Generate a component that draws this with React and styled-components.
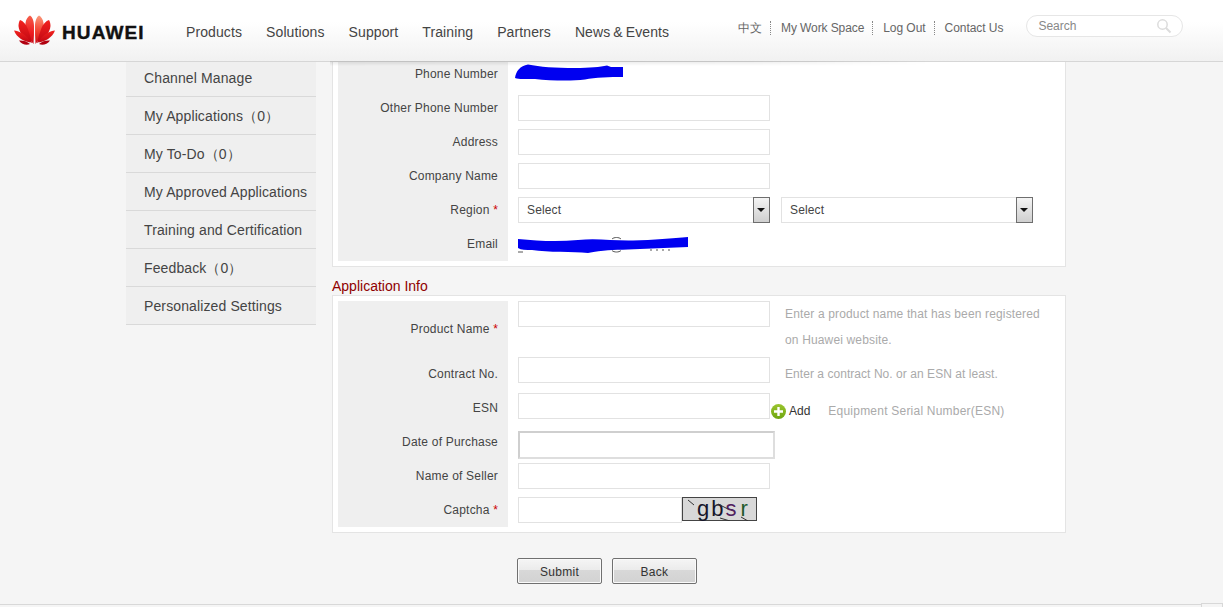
import React from "react";
import styled, { createGlobalStyle } from "styled-components";

const navItems = ["Products", "Solutions", "Support", "Training", "Partners", "News & Events"];
const topLinks = ["中文", "My Work Space", "Log Out", "Contact Us"];
const sideItems = [
  "Channel Manage",
  "My Applications（0）",
  "My To-Do（0）",
  "My Approved Applications",
  "Training and Certification",
  "Feedback（0）",
  "Personalized Settings",
];

const GlobalStyle = createGlobalStyle`
  html, body {
    margin: 0;
    padding: 0;
    background: #f5f5f5;
    font-family: "Liberation Sans", Arial, sans-serif;
    overflow: hidden;
  }
  * { box-sizing: border-box; }
`;

// left half of the logo, drawn a second time mirrored
const Petals = ({ light }) => (
  <>
    <path d="M19.500 29 C14 22 10.500 15 11.500 8 C12 4 14 1.500 16 0.500 C18.500 2 20 6 20 11 C20 17 20 23 19.500 29Z" fill={`url(#${light})`} />
    <path d="M18 28 C11 24 5 18 4.500 11 C4.500 9 5 6.500 6 5 C9 6 12 9 13.500 13 C15.500 18 17 23 18 28Z" fill="url(#petalMid)" />
    <path d="M16.500 27.500 C10 26.500 3 23 0 15.500 C5 16 10 19 13 22 C14.500 24 16 26 16.500 27.500Z" fill="url(#petalMid)" />
    <path d="M5 25.500 C8 25 13 26 16 29 C13 30.500 8 30 5 25.500Z" fill="#b00010" />
  </>
);

const Logo = () => (
  <svg width="41" height="31" viewBox="0 0 41 31">
    <defs>
      <linearGradient id="petalTopL" x1="0" y1="0" x2="0" y2="1">
        <stop offset="0" stopColor="#f5604c" />
        <stop offset="0.6" stopColor="#ee1c20" />
        <stop offset="1" stopColor="#c80a14" />
      </linearGradient>
      <linearGradient id="petalTopR" x1="0" y1="0" x2="0" y2="1">
        <stop offset="0" stopColor="#fb9a7c" />
        <stop offset="0.55" stopColor="#f2402f" />
        <stop offset="1" stopColor="#c80a14" />
      </linearGradient>
      <linearGradient id="petalMid" x1="0" y1="0" x2="0" y2="1">
        <stop offset="0" stopColor="#f2231f" />
        <stop offset="1" stopColor="#c00612" />
      </linearGradient>
    </defs>
    <Petals light="petalTopL" />
    <g transform="translate(41 0) scale(-1 1)">
      <Petals light="petalTopR" />
    </g>
  </svg>
);

const SearchGlyph = () => (
  <svg width="16" height="16" viewBox="0 0 16 16" fill="none" stroke="#dcdcdc">
    <circle cx="6.500" cy="6.500" r="4.700" strokeWidth="1.500" />
    <path d="M10 10l4.500 4.500" strokeWidth="2" />
  </svg>
);

const PhoneScribble = () => (
  <PhoneSvg width="108" height="18" viewBox="0 0 108 18">
    <path d="M0 14 C1 7 5 2 13 0.500 C25 3 40 4 60 4 C75 4 85 3 92 1.500 L96 3 L108 3 L108 13 C95 13 80 13.500 70 15.500 C55 17.500 35 16.500 20 15 C12 14.500 5 16 0 14Z" fill="#0000f0" />
  </PhoneSvg>
);

const EmailScribble = () => (
  <EmailSvg width="172" height="18" viewBox="0 0 172 18">
    <path d="M0 3 C20 5 40 6 60 4 C80 2 95 5 115 4.500 C135 4 155 2 170 1 L170 11 C150 12 130 12.500 110 13.500 C95 14 85 14 70 17 C55 15.500 30 16.500 14 14 C8 14 3 14 0 12Z" fill="#0000f0" />
    <path d="M94 3 C96 1 101 1 103 3 M94 14.500 C96 16.500 101 16.500 103 14.500 M0 16h5M132 14h2M138 14h2M144 14h2M150 14h2" stroke="#555" fill="none" />
  </EmailSvg>
);

const AddIcon = () => (
  <svg width="15" height="15" viewBox="0 0 15 15">
    <defs>
      <linearGradient id="addFill" x1="0" y1="0" x2="0" y2="1">
        <stop offset="0" stopColor="#9ac52e" />
        <stop offset="1" stopColor="#6fa510" />
      </linearGradient>
    </defs>
    <circle cx="7.500" cy="7.500" r="7.500" fill="url(#addFill)" />
    <path d="M6.300 3h2.400v3.300H12v2.400H8.700V12H6.300V8.700H3V6.300h3.300z" fill="#fff" />
  </svg>
);

const Row = ({ label, required, children }) => (
  <FormRow $height={34}>
    <LabelCell>
      {label}
      {required && <Star> *</Star>}
    </LabelCell>
    <ValueCell>{children}</ValueCell>
  </FormRow>
);

const Select = () => (
  <SelectBox>
    Select
    <SelectArrow />
  </SelectBox>
);

export default function App() {
  return (
    <>
      <GlobalStyle />
      <Page>
        <Header>
          <Brand>
            <Logo />
            <BrandName>HUAWEI</BrandName>
          </Brand>
          <Nav>
            {navItems.map((item) => (
              <NavLink key={item}>{item}</NavLink>
            ))}
          </Nav>
          <TopLinks>
            {topLinks.map((item, i) => (
              <TopLink key={item} $tight={i === 1} $last={i === topLinks.length - 1}>
                {item}
              </TopLink>
            ))}
          </TopLinks>
          <SearchBox>
            Search
            <SearchGlyph />
          </SearchBox>
          <HeaderShadow />
        </Header>

        <Body>
          <Sidebar>
            {sideItems.map((item, i) => (
              <SideItem key={item} $first={i === 0}>
                {item}
              </SideItem>
            ))}
          </Sidebar>

          <Main>
            <Panel>
              <Row label="Phone Number">
                <PhoneScribble />
              </Row>
              <Row label="Other Phone Number">
                <Input />
              </Row>
              <Row label="Address">
                <Input />
              </Row>
              <Row label="Company Name">
                <Input />
              </Row>
              <Row label="Region" required>
                <SelectPair>
                  <Select />
                  <Select />
                </SelectPair>
              </Row>
              <Row label="Email">
                <EmailScribble />
              </Row>
            </Panel>

            <SectionTitle>Application Info</SectionTitle>

            <Panel>
              <FormRow $height={56}>
                <LabelCell>
                  Product Name<Star> *</Star>
                </LabelCell>
                <TopValueCell>
                  <Input />
                  <Hint $width={270} $track={0.15}>
                    Enter a product name that has been registered on Huawei website.
                  </Hint>
                </TopValueCell>
              </FormRow>
              <FormRow $height={34}>
                <LabelCell>Contract No.</LabelCell>
                <TopValueCell>
                  <Input />
                  <Hint $top={4} $track={0.05}>
                    Enter a contract No. or an ESN at least.
                  </Hint>
                </TopValueCell>
              </FormRow>
              <FormRow $height={34}>
                <LabelCell>ESN</LabelCell>
                <TopValueCell $offset={2}>
                  <Input />
                  <AddLink>
                    <AddIcon />
                    Add
                  </AddLink>
                  <EsnHint $top={5} $track={0.22}>
                    Equipment Serial Number(ESN)
                  </EsnHint>
                </TopValueCell>
              </FormRow>
              <Row label="Date of Purchase">
                <DateInput />
              </Row>
              <Row label="Name of Seller">
                <Input />
              </Row>
              <Row label="Captcha" required>
                <CaptchaRow>
                  <CaptchaInput />
                  <Captcha>
                    <CaptchaLines width="75" height="24" viewBox="0 0 75 24">
                      <path d="M6 3l6 5M36 7l10 5M38 21l10 3M59 20l7 4" stroke="#333" fill="none" />
                    </CaptchaLines>
                    <CaptchaLetter>g</CaptchaLetter>
                    <CaptchaLetter>b</CaptchaLetter>
                    <CaptchaLetter $color="#50205e">s</CaptchaLetter>
                    <CaptchaLetter $color="#1f5a2a" $gap={2}>r</CaptchaLetter>
                  </Captcha>
                </CaptchaRow>
              </Row>
            </Panel>

            <Buttons>
              <Button>Submit</Button>
              <Button>Back</Button>
            </Buttons>
          </Main>
        </Body>

        <Footer>
          <FooterTab />
        </Footer>
      </Page>
    </>
  );
}

const Page = styled.div`
  height: 607px;
  display: flex;
  flex-direction: column;
  overflow: hidden;
`;

const Header = styled.header`
  position: relative;
  z-index: 2;
  flex: 0 0 62px;
  display: flex;
  padding-left: 14px;
  border-bottom: 1px solid #d6d6d6;
  background: linear-gradient(#fff 0, #fff 22px, #f1f1f1 61px);
`;

const Brand = styled.div`
  width: 172px;
  height: 31px;
  margin-top: 15px;
  display: flex;
  align-items: center;
  gap: 7px;
`;

const BrandName = styled.span`
  margin-top: 5px;
  font-size: 19px;
  font-weight: 700;
  color: #111;
  letter-spacing: 1.1px;
  -webkit-text-stroke: 0.4px #111;
`;

const Nav = styled.nav`
  display: flex;
  gap: 24px;
  padding-top: 24px;
`;

const NavLink = styled.a`
  font-size: 14px;
  line-height: 16px;
  letter-spacing: 0.1px;
  word-spacing: -1px;
  color: #444;
`;

const TopLinks = styled.div`
  display: flex;
  margin-left: 69px;
  padding-top: 21px;
`;

const TopLink = styled.a`
  font-size: 12px;
  line-height: 14px;
  height: 14px;
  letter-spacing: ${(p) => (p.$tight ? "-0.1px" : "-0.05px")};
  color: #666;
  padding-right: ${(p) => (p.$last ? 0 : "8px")};
  margin-right: ${(p) => (p.$last ? 0 : "10px")};
  border-right: ${(p) => (p.$last ? "none" : "1px dotted #888")};
`;

const SearchBox = styled.div`
  width: 157px;
  height: 22px;
  margin: 15px 0 0 23px;
  padding: 0 10px 0 11px;
  display: flex;
  align-items: center;
  justify-content: space-between;
  background: #fff;
  border: 1px solid #e6e6e6;
  border-radius: 11px;
  font-size: 12px;
  color: #888;
`;

const HeaderShadow = styled.div`
  position: absolute;
  left: 330px;
  top: 61px;
  width: 600px;
  height: 5px;
  background: linear-gradient(90deg, rgba(0, 0, 0, 0.1), rgba(0, 0, 0, 0.08) 70%, rgba(0, 0, 0, 0));
  -webkit-mask-image: linear-gradient(#000, transparent);
  mask-image: linear-gradient(#000, transparent);
`;

const Body = styled.div`
  flex: 1;
  display: flex;
  align-items: flex-start;
  padding-left: 126px;
`;

const Sidebar = styled.aside`
  width: 190px;
  flex-shrink: 0;
`;

const SideItem = styled.div`
  height: ${(p) => (p.$first ? "35px" : "38px")};
  padding: ${(p) => (p.$first ? "8px" : "11px")} 0 0 18px;
  background: #efefef;
  border-bottom: 1px solid #d9d9d9;
  font-size: 14px;
  line-height: 16px;
  letter-spacing: 0.12px;
  color: #444;
`;

/* the page is scrolled a little: the top of the first panel sits under the header */
const Main = styled.main`
  width: 734px;
  margin: -11px 0 0 16px;
`;

const Panel = styled.section`
  background: #fff;
  border: 1px solid #e4e4e4;
  padding: 5px;
`;

const SectionTitle = styled.h2`
  margin: 0;
  height: 28px;
  padding-top: 11px;
  font-size: 14px;
  line-height: 16px;
  font-weight: 400;
  color: #900000;
`;

const FormRow = styled.div`
  display: flex;
  height: ${(p) => p.$height}px;
`;

const LabelCell = styled.div`
  width: 170px;
  flex-shrink: 0;
  display: flex;
  align-items: center;
  justify-content: flex-end;
  white-space: pre;
  padding-right: 10px;
  background: #efefef;
  font-size: 12px;
  letter-spacing: 0.2px;
  color: #444;
`;

const Star = styled.span`
  color: #c00;
`;

const ValueCell = styled.div`
  flex: 1;
  display: flex;
  align-items: center;
  padding-left: 10px;
`;

const TopValueCell = styled.div`
  flex: 1;
  display: flex;
  align-items: flex-start;
  padding: ${(p) => p.$offset || 0}px 0 0 10px;
`;

const Input = styled.input`
  width: 252px;
  height: 26px;
  flex-shrink: 0;
  background: #fff;
  border: 1px solid #e2e2e2;
  outline: none;
`;

const DateInput = styled(Input)`
  width: 257px;
  height: 28px;
  margin-top: 6px;
  border: 2px solid;
  border-color: #cfcfcf #dedede #dedede #cfcfcf;
`;

const CaptchaRow = styled.div`
  display: flex;
  align-items: flex-start;
`;

const CaptchaInput = styled(Input)`
  width: 164px;
`;

const Captcha = styled.div`
  position: relative;
  width: 75px;
  height: 24px;
  display: flex;
  align-items: center;
  padding-left: 14px;
  gap: 2px;
  background: #d8d8d8;
  border: 1px solid #444;
  font-size: 22px;
  line-height: 22px;
`;

const CaptchaLetter = styled.span`
  margin-left: ${(p) => p.$gap || 0}px;
  color: ${(p) => p.$color || "#15152a"};
`;

const CaptchaLines = styled.svg`
  position: absolute;
  left: -1px;
  top: -1px;
`;

const Hint = styled.div`
  width: ${(p) => (p.$width ? `${p.$width}px` : "auto")};
  margin: ${(p) => p.$top || 0}px 0 0 15px;
  font-size: 12px;
  line-height: 26px;
  color: #aaa;
  letter-spacing: ${(p) => p.$track}px;
`;

const EsnHint = styled(Hint)`
  margin-left: 18px;
`;

const AddLink = styled.div`
  display: flex;
  align-items: center;
  gap: 3px;
  margin: 10px 0 0 1px;
  height: 16px;
  font-size: 12px;
  color: #333;
`;

const SelectPair = styled.div`
  display: flex;
  gap: 11px;
`;

const SelectBox = styled.div`
  width: 252px;
  height: 26px;
  display: flex;
  align-items: center;
  justify-content: space-between;
  padding-left: 8px;
  background: #fff;
  border: 1px solid #e2e2e2;
  font-size: 12px;
  letter-spacing: 0.15px;
  color: #444;
`;

const SelectArrow = styled.span`
  position: relative;
  width: 17px;
  height: 26px;
  margin: -1px -1px 0 0;
  background: linear-gradient(#f4f4f4, #cfcfcf);
  border: 1px solid #6e6e6e;

  &::after {
    content: "";
    position: absolute;
    left: 3px;
    top: 10px;
    border: 4px solid transparent;
    border-top: 4px solid #111;
    border-bottom: 0;
  }
`;

const PhoneSvg = styled.svg`
  display: block;
  margin: -2px 0 0 -3px;
`;

const EmailSvg = styled.svg`
  display: block;
  margin: 2px 0 0 0;
`;

const Buttons = styled.div`
  display: flex;
  gap: 10px;
  margin-top: 25px;
  padding-left: 185px;
`;

const Button = styled.button`
  width: 85px;
  height: 26px;
  padding: 2px 0 0;
  border: 1px solid #707070;
  border-radius: 2px;
  background: linear-gradient(#f5f5f5 0, #ebebeb 46%, #d8d8d8 47%, #d2d2d2 100%);
  box-shadow: inset 0 0 0 1px #fafafa;
  font-family: inherit;
  font-size: 12px;
  letter-spacing: 0.3px;
  color: #333;
`;

const Footer = styled.footer`
  position: relative;
  flex: 0 0 3px;
  border-top: 1px solid #d8d8d8;
`;

const FooterTab = styled.div`
  position: absolute;
  right: 0;
  top: -2px;
  width: 22px;
  height: 10px;
  background: #f5f5f5;
  border: 1px solid #d8d8d8;
`;
